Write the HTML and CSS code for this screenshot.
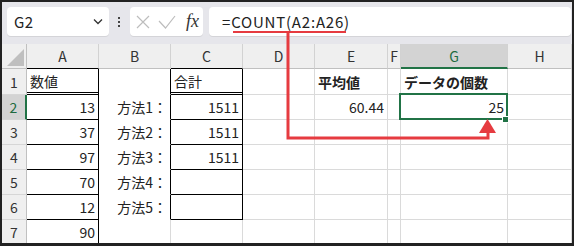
FILE: index.html
```html
<!DOCTYPE html>
<html>
<head>
    <meta charset="UTF-8">
    <title>COUNT関数</title>
    <link rel="stylesheet" href="styles.css">
</head>
<body>
    <div class="window">
        <div class="toolbar">
            <div class="namebox">
                <span class="ref">G2</span>
                <svg class="chev" width="10" height="7" viewBox="0 0 10 7"><path d="M1 1.5 L5 5.5 L9 1.5"/></svg>
            </div>
            <svg class="dots" width="21" height="29" viewBox="0 0 21 29">
                <rect x="9" y="10" width="2" height="2"/>
                <rect x="9" y="14" width="2" height="2"/>
                <rect x="9" y="18" width="2" height="2"/>
            </svg>
            <div class="fnbox">
                <svg class="icon" width="14" height="14" viewBox="0 0 14 14"><path d="M1 1 L13 13 M13 1 L1 13"/></svg>
                <svg class="icon" width="18" height="14" viewBox="0 0 18 14"><path d="M1 6 L7.5 13 L17 1"/></svg>
                <span class="fx">fx</span>
            </div>
            <div class="formula">=COUNT(A2:A26)</div>
        </div>

        <div class="sheet">
            <div class="cell corner"></div>
            <div class="cell ch top">A</div>
            <div class="cell ch">B</div>
            <div class="cell ch top">C</div>
            <div class="cell ch">D</div>
            <div class="cell ch">E</div>
            <div class="cell ch">F</div>
            <div class="cell ch active">G</div>
            <div class="cell ch">H</div>

            <div class="cell rh">1</div>
            <div class="cell bx dbl">数値</div>
            <div class="cell gap"></div>
            <div class="cell bx dbl">合計</div>
            <div class="cell"></div>
            <div class="cell bold">平均値</div>
            <div class="cell"></div>
            <div class="cell bold">データの個数</div>
            <div class="cell"></div>

            <div class="cell rh active">2</div>
            <div class="cell bx num">13</div>
            <div class="cell gap num">方法1：</div>
            <div class="cell bx num">1511</div>
            <div class="cell"></div>
            <div class="cell num">60.44</div>
            <div class="cell"></div>
            <div class="cell num selected">25</div>
            <div class="cell"></div>

            <div class="cell rh">3</div>
            <div class="cell bx num">37</div>
            <div class="cell gap num">方法2：</div>
            <div class="cell bx num">1511</div>
            <div class="cell"></div>
            <div class="cell"></div>
            <div class="cell"></div>
            <div class="cell"></div>
            <div class="cell"></div>

            <div class="cell rh">4</div>
            <div class="cell bx num">97</div>
            <div class="cell gap num">方法3：</div>
            <div class="cell bx num">1511</div>
            <div class="cell"></div>
            <div class="cell"></div>
            <div class="cell"></div>
            <div class="cell"></div>
            <div class="cell"></div>

            <div class="cell rh">5</div>
            <div class="cell bx num">70</div>
            <div class="cell gap num">方法4：</div>
            <div class="cell bx"></div>
            <div class="cell"></div>
            <div class="cell"></div>
            <div class="cell"></div>
            <div class="cell"></div>
            <div class="cell"></div>

            <div class="cell rh">6</div>
            <div class="cell bx num">12</div>
            <div class="cell gap num">方法5：</div>
            <div class="cell bx"></div>
            <div class="cell"></div>
            <div class="cell"></div>
            <div class="cell"></div>
            <div class="cell"></div>
            <div class="cell"></div>

            <div class="cell rh">7</div>
            <div class="cell bx num">90</div>
            <div class="cell open"></div>
            <div class="cell"></div>
            <div class="cell"></div>
            <div class="cell"></div>
            <div class="cell"></div>
            <div class="cell"></div>
            <div class="cell"></div>
        </div>

        <svg class="arrow" width="574" height="246" viewBox="0 0 574 246">
            <path class="line" d="M233 32 H346" stroke-width="2"/>
            <path class="line" d="M288 32 V138 H488 V131" stroke-width="3"/>
            <path class="head" d="M479 133 L496 133 L487.5 119 Z"/>
        </svg>
    </div>
</body>
</html>
```

FILE: styles.css
```css
body {
    margin: 0;
}
.window {
    position: relative;
    width: 574px;
    height: 246px;
    box-sizing: border-box;
    border: 2px solid #222;
    border-bottom-width: 3px;
    background: #e6e6eb;
    overflow: hidden;
    font-family: "Noto Sans CJK JP", sans-serif;
    color: #222;
}

/* formula bar */
.toolbar {
    display: flex;
    height: 42px;
    box-sizing: border-box;
    padding: 5px 1px 0 5px;
}
.namebox, .fnbox, .formula {
    height: 29px;
    box-sizing: border-box;
    background: #fff;
    border-radius: 4px;
    box-shadow: 0 1px 0 #d4d4d8;
}
.namebox {
    width: 102px;
    display: flex;
    align-items: center;
    justify-content: space-between;
    padding: 0 6px 0 7px;
    font-size: 15px;
    letter-spacing: 0.5px;
}
.chev path {
    fill: none;
    stroke: #333;
    stroke-width: 1.3;
}
.dots {
    fill: #444;
}
.fnbox {
    width: 73px;
    display: flex;
    align-items: center;
    padding-left: 6px;
    gap: 8px;
}
.icon path {
    fill: none;
    stroke: #bdbdbd;
    stroke-width: 1.2;
}
.fx {
    font-family: "Liberation Serif", serif;
    font-style: italic;
    font-size: 18px;
    color: #333;
    margin-left: 2px;
}
.formula {
    flex: 1;
    margin-left: 6px;
    padding-left: 13px;
    font-size: 15px;
    letter-spacing: 0.8px;
    line-height: 29px;
}

/* sheet grid */
.sheet {
    display: grid;
    grid-template-columns: 25px 72px 72px 72px 72px 73px 13px 107px 64px;
    grid-template-rows: 25px 26px repeat(6, 25px);
    background: #fff;
    font-size: 14px;
}
.cell {
    position: relative;
    box-sizing: border-box;
    display: flex;
    align-items: center;
    padding: 0 3px;
    white-space: nowrap;
    border-right: 1px solid #dadada;
    border-bottom: 1px solid #dadada;
}
.ch, .rh, .corner {
    background: #efefef;
    color: #333;
    justify-content: center;
    padding: 0;
}
.ch {
    border-right-color: #d2d2d2;
    border-bottom-color: #c0c0c0;
}
.ch.top {
    border-bottom-color: #000;
}
.rh {
    border-right-color: #c0c0c0;
    border-bottom-color: #d6d6d6;
}
.corner {
    border-right-color: #c0c0c0;
    border-bottom-color: #c0c0c0;
}
.corner::after {
    content: "";
    position: absolute;
    left: 5px;
    top: 5px;
    width: 17px;
    height: 17px;
    background: #bfbfbf;
    clip-path: polygon(100% 0, 100% 100%, 0 100%);
}
.ch.active {
    background: #d3d3d3;
    color: #1e6b40;
    border-bottom: 2px solid #217346;
}
.rh.active {
    background: #d3d3d3;
    color: #1e6b40;
    border-right: 2px solid #217346;
}
.bx {
    border-right-color: #000;
    border-bottom-color: #000;
}
.dbl {
    border-bottom: 3px double #000;
}
.gap {
    border-right-color: #000;
    border-bottom-color: #fff;
}
.open {
    border-bottom-color: #fff;
}
.num {
    justify-content: flex-end;
}
.bold {
    font-weight: bold;
}
.selected::after {
    content: "";
    position: absolute;
    top: -2px;
    left: -2px;
    right: -1px;
    bottom: -1px;
    border: 2px solid #217346;
}
.selected::before {
    content: "";
    position: absolute;
    right: -2px;
    bottom: -4px;
    width: 5px;
    height: 5px;
    background: #217346;
    border: 1px solid #fff;
    z-index: 1;
}

/* red annotation */
.arrow {
    position: absolute;
    left: -2px;
    top: -2px;
    pointer-events: none;
}
.arrow .line {
    fill: none;
    stroke: #e63b40;
}
.arrow .head {
    fill: #e63b40;
}
```
